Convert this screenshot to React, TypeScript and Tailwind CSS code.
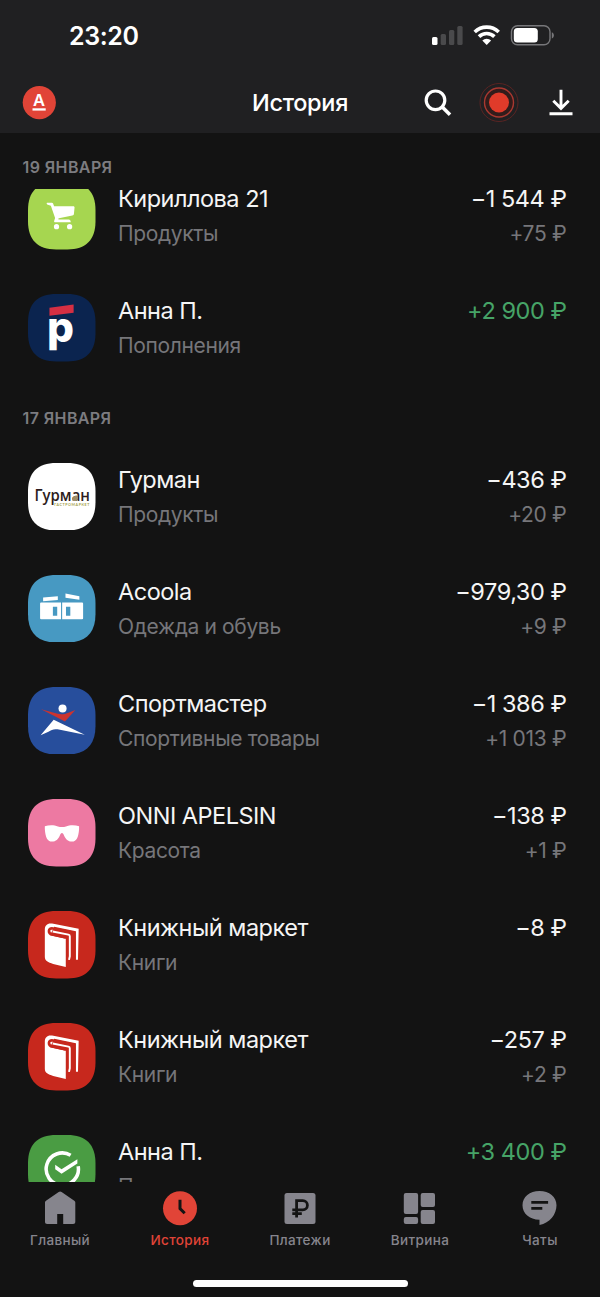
import type { ReactNode } from "react";
import clsx from "clsx";

type Operation = {
  id: number;
  title: string;
  category: string;
  amount: string;
  bonus?: string;
  income?: boolean;
  icon: ReactNode;
};

const SQUIRCLE =
  "M0 28C0 9.500 9.500 0 28 0H39C57.500 0 67 9.500 67 28V39C67 57.500 57.500 67 39 67H28C9.500 67 0 57.500 0 39Z";

function Tile({ fill, children }: { fill: string; children: ReactNode }) {
  return (
    <svg width="67.500" height="67.500" viewBox="0 0 67 67" className="block shrink-0" fill="none">
      <path d={SQUIRCLE} fill={fill} />
      {children}
    </svg>
  );
}

function CartIcon() {
  return (
    <Tile fill="#a6d650">
      <path
        d="M19 20.5h4.6c.7 0 1.2.4 1.4 1l.9 2.5h19c.9 0 1.4.6 1.3 1.4l-.6 6c-.1.9-.6 1.6-1.6 1.9L30.7 36c-.9.3-.7 1.3.2 1.3h9.5c1.300 0 2 .9 2 2.700H27.200c-1 0-1.500-.7-1.200-1.600l.9-2.700-4.200-12.100-3-1c-.9-.3-1.200-.9-1.200-1.700Z"
        fill="#fff"
      />
      <circle cx="28.300" cy="44.300" r="2.600" fill="#fff" />
      <circle cx="41.300" cy="44.300" r="2.600" fill="#fff" />
    </Tile>
  );
}

function PochtaIcon() {
  return (
    <Tile fill="#0b244f">
      <path d="M21.300 13.700 45.300 10.500v8L21.300 21.600Z" fill="#d52f43" />
      <text x="18.800" y="48" fill="#fff" fontSize="42" fontWeight="800" fontFamily="Inter, sans-serif">
        p
      </text>
    </Tile>
  );
}

function GourmanIcon() {
  return (
    <Tile fill="#fff">
      <text x="6.500" y="37.500" fill="#2d1c20" fontSize="15.500" fontWeight="600" fontFamily="Open Sans, sans-serif" textLength="55" lengthAdjust="spacingAndGlyphs">
        Гурман
      </text>
      <path d="M44 37.300c-.5-3.500 2.500-5.300 5.500-5v4c-1 1.500-3.500 2-5.500 1Z" fill="#9c8c69" />
      <text x="26" y="43" fill="#a5a04c" fontSize="3.600" fontWeight="700" fontFamily="Lato, sans-serif" textLength="35">
        ГАСТРОМАРКЕТ
      </text>
    </Tile>
  );
}

function AcoolaIcon() {
  return (
    <Tile fill="#4799c2">
      <path d="m15 22.300 14.600-1.100v3.600L15 26.100ZM37.200 18.300l13.800 2.700v3.600l-13.800-2Z" fill="#fff" />
      <path
        fillRule="evenodd"
        d="M13 27.200h19.800v16.800H13a1 1 0 0 1-1-1V28.200a1 1 0 0 1 1-1ZM33.900 27.200h19.800a1 1 0 0 1 1 1V43a1 1 0 0 1-1 1H33.900ZM24.700 31.500v9H29v-9ZM37.700 31.500v9H42v-9Z"
        fill="#fff"
      />
    </Tile>
  );
}

function SportIcon() {
  return (
    <Tile fill="#274e9c">
      <circle cx="34.300" cy="21.300" r="4" fill="#fff" />
      <path d="m13 22 16.500 4.500c4 1 7 .3 10-.8l7.500-2.900-10.300 11.500Z" fill="#cb3330" />
      <path d="m25.500 32.500 30.800 15-27-5.500c-4-.6-6 .6-9 2.400l-7.800 3.400Z" fill="#fff" />
    </Tile>
  );
}

function GlassesIcon() {
  return (
    <Tile fill="#ed79a2">
      <path
        d="M16.700 27c4-1.300 9.300-1.300 13 .2 2.300.8 5.700.8 8 0 3.700-1.500 9-1.500 13-.2v3c-.6 8-2.500 12.300-7 12.300-4.200 0-6.300-2.600-7.800-5.800-.8-1.600-1.200-2.700-2.200-2.700s-1.400 1.100-2.200 2.700c-1.500 3.200-3.600 5.800-7.800 5.800-4.500 0-6.400-4.300-7-12.300Z"
        fill="#fff"
      />
    </Tile>
  );
}

function BookIcon() {
  return (
    <Tile fill="#c7281d">
      <path
        d="M16.700 18.500c0-4.600 3-6.900 7.200-6L50.300 17.700 49.600 48.500H47.600V20L26 15.700 22 24l15.500 3.500v28l-12.500-3c-5-1.200-8.300-3-8.300-7Z"
        fill="#fff"
      />
      <path d="M37.500 26.300 24 23.300c-4.500-1-4.300-6.800.7-6l20 4.200v25" stroke="#c7281d" strokeWidth="2.600" />
      <path d="m24.500 20.300 15.600 3.200c1 .2 1.400.6 1.400 1.600V45l-.8 3.500" stroke="#fff" strokeWidth="1.900" />
    </Tile>
  );
}

function CheckIcon() {
  return (
    <Tile fill="#4a9c43">
      <path d="M42.300 20.100A16 16 0 1 0 49.800 31" stroke="#fff" strokeWidth="3.500" />
      <path d="m27 29.500 6.300 4.600L49 24v4.300l-15.700 10.200L27 34Z" fill="#fff" />
    </Tile>
  );
}

const january19: Operation[] = [
  { id: 1, title: "Кириллова 21", category: "Продукты", amount: "−1 544 ₽", bonus: "+75 ₽", icon: <CartIcon /> },
  { id: 2, title: "Анна П.", category: "Пополнения", amount: "+2 900 ₽", income: true, icon: <PochtaIcon /> },
];

const january17: Operation[] = [
  { id: 3, title: "Гурман", category: "Продукты", amount: "−436 ₽", bonus: "+20 ₽", icon: <GourmanIcon /> },
  { id: 4, title: "Acoola", category: "Одежда и обувь", amount: "−979,30 ₽", bonus: "+9 ₽", icon: <AcoolaIcon /> },
  { id: 5, title: "Спортмастер", category: "Спортивные товары", amount: "−1 386 ₽", bonus: "+1 013 ₽", icon: <SportIcon /> },
  { id: 6, title: "ONNI APELSIN", category: "Красота", amount: "−138 ₽", bonus: "+1 ₽", icon: <GlassesIcon /> },
  { id: 7, title: "Книжный маркет", category: "Книги", amount: "−8 ₽", icon: <BookIcon /> },
  { id: 8, title: "Книжный маркет", category: "Книги", amount: "−257 ₽", bonus: "+2 ₽", icon: <BookIcon /> },
  { id: 9, title: "Анна П.", category: "Пополнения", amount: "+3 400 ₽", income: true, icon: <CheckIcon /> },
];

function OperationRow({ title, category, amount, bonus, income, icon }: Operation) {
  return (
    <li className="flex h-[112.150px] items-start pt-[22.3px] pr-[33.5px] pl-[28px]">
      {icon}
      <div className="ml-[22.5px] flex-1 whitespace-nowrap">
        <p className="text-[23.5px] leading-[34px] tracking-[-0.5px] text-[#f5f5f5]">{title}</p>
        <p className="text-[21px] leading-[35px] tracking-[-0.35px] text-[#76767a]">{category}</p>
      </div>
      <div className="text-right whitespace-nowrap">
        <p
          className={clsx(
            "text-[23.5px] leading-[34px] tracking-[-0.45px]",
            income ? "text-[#46a467]" : "text-[#f5f5f5]",
          )}
        >
          {amount}
        </p>
        {bonus && <p className="text-[21px] leading-[35px] tracking-[-0.3px] text-[#76767a]">{bonus}</p>}
      </div>
    </li>
  );
}

function DateLabel({ children }: { children: ReactNode }) {
  return (
    <h2 className="h-14 shrink-0 pt-6 pl-[22.5px] text-[16px] leading-5 font-semibold tracking-[0.4px] text-[#7c7c80] uppercase">
      {children}
    </h2>
  );
}

function StatusBar() {
  return (
    <div className="flex h-[72px] items-center justify-between pr-[45px] pl-[69px]">
      <span className="text-[25px] leading-none font-semibold tracking-[-0.4px] text-white">23:20</span>
      <svg width="123" height="24" viewBox="0 0 123 24" fill="none">
        <rect y="13" width="5.500" height="8" rx="1.500" fill="#fff" />
        <rect x="8.700" y="10" width="5.300" height="11" rx="1.500" fill="#4a4a4c" />
        <rect x="17" y="6" width="5.300" height="15" rx="1.500" fill="#4a4a4c" />
        <rect x="25.300" y="2" width="5.300" height="19" rx="1.500" fill="#4a4a4c" />
        <path d="M42.700 8a17.300 17.300 0 0 1 24 0M47 12.600a11 11 0 0 1 15.400 0" stroke="#fff" strokeWidth="3.600" />
        <path d="M50.300 16.600a6.400 6.400 0 0 1 8.800 0l-4.400 4.500Z" fill="#fff" />
        <rect x="79.500" y="1.800" width="38.500" height="19" rx="6" stroke="#77777a" strokeWidth="1.400" />
        <rect x="81.800" y="4.100" width="24" height="14.400" rx="3.500" fill="#fff" />
        <path d="M119.800 8.300c2.800 1.300 2.800 5 0 6.300Z" fill="#77777a" />
      </svg>
    </div>
  );
}

function TopBar() {
  return (
    <div className="grid h-[61px] grid-cols-[1fr_auto_1fr] items-center px-[27px]">
      <svg width="34" height="34" viewBox="0 0 34 34" className="-ml-[5px]">
        <circle cx="17.300" cy="16.600" r="16.600" fill="#e14437" />
        <text x="17" y="19.700" textAnchor="middle" fill="#fff" fontSize="16.500" fontWeight="600" fontFamily="Inter, sans-serif">
          А
        </text>
        <path d="M10.500 22.300h13.200v2.300H10.500Z" fill="#fff" />
      </svg>
      <h1 className="text-[23.5px] leading-8 font-medium tracking-[-0.3px] text-white">История</h1>
      <div className="flex items-center justify-end">
        <svg width="28" height="28" viewBox="0 0 28 28" fill="none" stroke="#fff" strokeWidth="3.200">
          <circle cx="11.500" cy="11.300" r="9.300" />
          <path d="m18 17.800 8 8" strokeWidth="3.600" />
        </svg>
        <svg width="40" height="40" viewBox="0 0 40 40" fill="none" className="ml-[27px]">
          <circle cx="20" cy="19.500" r="19" stroke="#5a2422" />
          <circle cx="20" cy="19.500" r="14.500" fill="#321c1b" stroke="#a93830" strokeWidth="1.400" />
          <circle cx="20" cy="19.500" r="10" fill="#e03b2a" />
        </svg>
        <svg width="24" height="28" viewBox="0 0 24 28" fill="none" stroke="#fff" strokeWidth="2.900" className="ml-[30px]">
          <path d="M12 .7v18M4.300 11.800l7.700 7.600 7.700-7.600M.5 24.700h23" />
        </svg>
      </div>
    </div>
  );
}

function TabItem({ label, active, children }: { label: string; active?: boolean; children: ReactNode }) {
  return (
    <a className={clsx("flex flex-1 flex-col items-center", active ? "text-[#e14437]" : "text-[#86858d]")}>
      <svg width="36" height="36" viewBox="0 0 36 36" fill="currentColor">
        {children}
      </svg>
      <span className="mt-[3.500px] text-[13.5px] leading-5 font-medium tracking-[0.35px]">{label}</span>
    </a>
  );
}

function TabBar() {
  return (
    <nav className="flex h-[115px] shrink-0 flex-col bg-[#131313]">
      <div className="flex pt-2">
        <TabItem label="Главный">
          <path d="M16.700 2.100a2.600 2.600 0 0 1 2.900 0l12.700 8.600c.7.5 1 1 1 1.900v19.200c0 1.400-.8 2.200-2.200 2.200H21.200V24h-6v10H5.200c-1.400 0-2.200-.8-2.200-2.200V12.600c0-.9.3-1.400 1-1.900Z" />
        </TabItem>
        <TabItem label="История" active>
          <circle cx="18" cy="18.200" r="17" />
          <path d="M18 9.800v8.800l4.700 4.700" stroke="#131313" strokeWidth="3" fill="none" />
        </TabItem>
        <TabItem label="Платежи">
          <rect x="2.500" y="3" width="31" height="31" rx="2.500" />
          <path d="M14.600 27.500V10.700h6.200a4.600 4.600 0 0 1 0 9.200H10.300M10.300 23.700h9.500" stroke="#131313" strokeWidth="2.800" fill="none" />
        </TabItem>
        <TabItem label="Витрина">
          <rect x="1.800" y="3" width="14.300" height="21" rx="2" />
          <rect x="1.800" y="27" width="14.300" height="7" rx="2" />
          <rect x="18.700" y="3" width="14.300" height="14" rx="2" />
          <rect x="18.700" y="20" width="14.300" height="14" rx="2" />
        </TabItem>
        <TabItem label="Чаты">
          <path d="M17.500 1c9.800 0 17 5.700 17 14.200 0 9-6.500 17.600-17 19.800v-5.300C7.500 29.500.5 23.600.5 15.200.5 6.700 7.700 1 17.500 1Z" />
          <path d="M9.300 12.400h16.800M9.300 18.300h11" stroke="#131313" strokeWidth="2.700" />
        </TabItem>
      </div>
      <div className="mx-auto mt-[30px] h-[7px] w-[215px] rounded-full bg-white" />
    </nav>
  );
}

export default function App() {
  return (
    <div className="flex h-[1297px] w-[600px] flex-col overflow-hidden bg-[#131313] font-['Inter',sans-serif]">
      <header className="h-[133px] shrink-0 bg-[#202022]">
        <StatusBar />
        <TopBar />
      </header>
      <DateLabel>19 января</DateLabel>
      <main className="min-h-0 flex-1 overflow-hidden">
        {/* list is scrolled slightly under the sticky date */}
        <ul className="-mt-[29px]">
          {january19.map((op) => (
            <OperationRow key={op.id} {...op} />
          ))}
        </ul>
        <DateLabel>17 января</DateLabel>
        <ul>
          {january17.map((op) => (
            <OperationRow key={op.id} {...op} />
          ))}
        </ul>
      </main>
      <TabBar />
    </div>
  );
}
